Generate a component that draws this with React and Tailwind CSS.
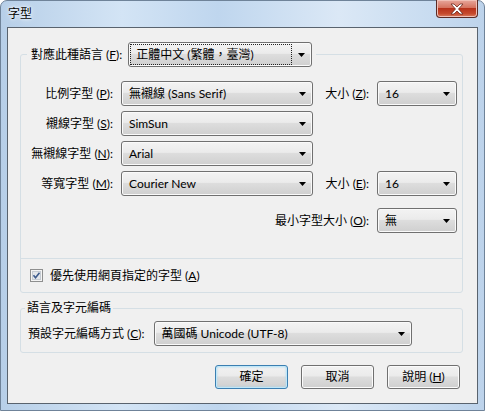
import React from 'react';

// Vista-style combobox
const Select = ({ value, width, focus }) => (
  <div
    className={`flex h-[25px] ${width} rounded-[3px] border border-[#707070] bg-[linear-gradient(#f3f3f3,#ebebeb_45%,#dddddd_50%,#cfcfcf)] shadow-[inset_0_0_0_1px_#fafafa]`}
  >
    <div
      className={`flex-1 flex items-center m-[1px] mr-0 pl-[5px] border whitespace-nowrap ${
        focus ? 'border-dotted border-[#222]' : 'border-transparent'
      }`}
    >
      {value}
    </div>
    <div className="w-[19px] flex items-center justify-center">
      <svg width="7" height="4" viewBox="0 0 7 4">
        <path d="M0 0h7L3.5 4z" fill="#000" />
      </svg>
    </div>
  </div>
);

const Button = ({ children, primary }) => (
  <div
    className={`w-[73px] h-[24px] flex items-center justify-center rounded-[3px] border ${
      primary
        ? 'border-[#3c7fb1] shadow-[inset_0_0_0_1px_#bfe7f9,inset_0_0_2px_1px_#9fd7f3]'
        : 'border-[#707070] shadow-[inset_0_0_0_1px_#fbfbfb]'
    } bg-[linear-gradient(#f2f2f2,#ebebeb_45%,#dddddd_50%,#cfcfcf)]`}
  >
    {children}
  </div>
);

const Label = ({ children }) => (
  <span className="whitespace-nowrap text-right">{children}</span>
);

const App = () => {
  return (
    <div className="w-[485px] h-[411px] flex flex-col rounded-t-[7px] border border-[#6f8399] bg-[linear-gradient(90deg,#b7cfe8,#d3e4f5_25%,#bfd6ee_45%,#dbe8f6_70%,#c7dbf0_90%,#bdd3eb)] font-['Lato','Noto_Sans_CJK_TC',sans-serif] text-[12px] leading-[16px] text-black">
      {/* Title bar */}
      <div className="h-[26px] flex justify-between shrink-0">
        <span className="pl-[7px] pt-[5px] text-[12px] text-black [text-shadow:0_0_6px_#ffffff,0_0_3px_#ffffff]">
          字型
        </span>
        <div className="mr-[6px] -mt-px w-[42px] h-[18px] flex items-center justify-center rounded-b-[4px] border border-t-0 border-[#5b2b25] bg-[linear-gradient(#e7a79c,#d5735f_45%,#b7321b_50%,#c64a2d_80%,#d97f62)] shadow-[inset_0_0_0_1px_#f0bfb5]">
          <svg width="16" height="12" viewBox="0 0 16 12">
            <path
              d="M2 1h3l3 3 3-3h3l-4.5 5 4.5 5h-3l-3-3-3 3H2l4.5-5z"
              fill="#ffffff"
              stroke="#6a2a20"
              strokeWidth="0.8"
            />
          </svg>
        </div>
      </div>

      {/* Client area */}
      <div className="flex-1 mx-[6px] mb-[6px] border border-[#59636e] bg-[#f0f0f0] flex flex-col">
        <fieldset className="ml-[12px] mt-[14px] w-[443px] rounded-[3px] border border-[#d5dfe5]">
          <legend className="ml-[6px] px-[4px]">
            <div className="flex items-center gap-[6px]">
              <Label>
                對應此種語言 (<u>F</u>):
              </Label>
              <Select value="正體中文 (繁體，臺灣)" width="w-[184px]" focus />
            </div>
          </legend>

          <div className="grid grid-cols-[92px_192px_48px_80px] gap-x-[8px] gap-y-[5px] items-center pt-[14px]">
            <Label>
              比例字型 (<u>P</u>):
            </Label>
            <Select value="無襯線 (Sans Serif)" width="w-[192px]" />
            <Label>
              大小 (<u>Z</u>):
            </Label>
            <Select value="16" width="w-[80px]" />

            <Label>
              襯線字型 (<u>S</u>):
            </Label>
            <Select value="SimSun" width="w-[192px]" />
            <div />
            <div />

            <Label>
              無襯線字型 (<u>N</u>):
            </Label>
            <Select value="Arial" width="w-[192px]" />
            <div />
            <div />

            <Label>
              等寬字型 (<u>M</u>):
            </Label>
            <Select value="Courier New" width="w-[192px]" />
            <Label>
              大小 (<u>E</u>):
            </Label>
            <Select value="16" width="w-[80px]" />
          </div>

          <div className="flex justify-end items-center gap-[8px] mt-[12px] mr-[5px]">
            <Label>
              最小字型大小 (<u>O</u>):
            </Label>
            <Select value="無" width="w-[80px]" />
          </div>

          <div className="mt-[25px] border-t border-[#d5dfe5] h-[34px] flex items-center gap-[7px] pl-[9px]">
            <svg width="13" height="13" viewBox="0 0 13 13">
              <rect x="0.5" y="0.5" width="12" height="12" fill="#f4f4f4" stroke="#8e8f8f" />
              <rect x="2.5" y="2.5" width="8" height="8" fill="#e3e6ea" stroke="#c5cbd2" />
              <path d="M3.5 6.3l2 2.4 4-5" fill="none" stroke="#3c5a8c" strokeWidth="1.6" />
            </svg>
            <span>
              優先使用網頁指定的字型 (<u>A</u>)
            </span>
          </div>
        </fieldset>

        <fieldset className="ml-[12px] mt-[7px] w-[443px] rounded-[3px] border border-[#d5dfe5]">
          <legend className="ml-[4px] px-[2px]">語言及字元編碼</legend>
          <div className="flex items-center gap-[9px] pl-[7px] mt-[5px] pb-[6px]">
            <Label>
              預設字元編碼方式 (<u>C</u>):
            </Label>
            <Select value="萬國碼 Unicode (UTF-8)" width="w-[258px]" />
          </div>
        </fieldset>

        <div className="flex justify-end gap-[13px] pr-[17px] mt-[12px]">
          <Button primary>確定</Button>
          <Button>取消</Button>
          <Button>
            說明 (<u>H</u>)
          </Button>
        </div>
      </div>
    </div>
  );
};

export default App;
